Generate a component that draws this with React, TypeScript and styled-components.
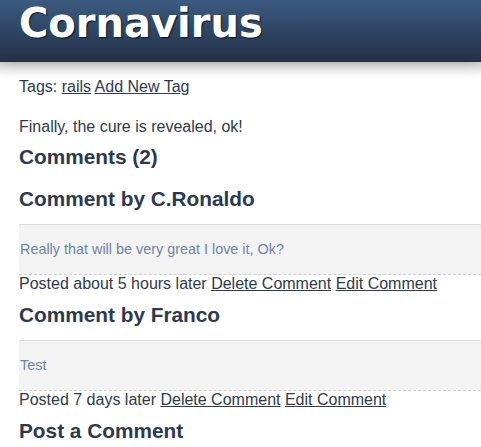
import React from "react";
import styled, { createGlobalStyle } from "styled-components";

const Global = createGlobalStyle`
  html, body { margin: 0; padding: 0; background: #fff; }
  body {
    font-family: "Liberation Sans", Arial, sans-serif;
    font-size: 16px;
    color: #2e3a4c;
    overflow: hidden;
  }
`;

const Header = styled.header`
  height: 62px;
  background: linear-gradient(to bottom, #3c5b80 0%, #2e4563 50%, #233146 100%);
  box-shadow: 0 2px 14px rgba(0, 0, 0, 0.22);
  position: relative;
`;

const Title = styled.h1`
  margin: 0;
  padding: 3px 0 0 19px;
  font-family: "DejaVu Sans", Verdana, sans-serif;
  font-weight: bold;
  font-size: 40px;
  line-height: 40px;
  color: #fff;
  text-shadow: 1px 1px 1px #0b1220;
`;

const Shade = styled.div`
  height: 16px;
  background: linear-gradient(to bottom, #d9d9d9 0%, #f3f3f3 55%, #ffffff 100%);
`;

const Content = styled.main`
  padding-left: 19px;
`;

const Line = styled.p<{ $top?: number }>`
  margin: ${(p) => p.$top ?? 0}px 0 0 0;
  line-height: 18px;
`;

const Link = styled.a`
  color: #2e3a4c;
  text-decoration: underline;
`;

const Heading = styled.h2<{ $top: number }>`
  margin: ${(p) => p.$top}px 0 0 0;
  font-size: 20.8px;
  line-height: 24px;
  font-weight: bold;
  color: #2c3a4f;
`;

const CommentBox = styled.div<{ $top: number }>`
  margin-top: ${(p) => p.$top}px;
  background: #f3f3f3;
  border-top: 1px solid #dcdcdc;
  border-bottom: 1px dashed #cfcfcf;
  padding: 16px 0 16px 1px;
  font-size: 14.4px;
  line-height: 17px;
  color: #7282a2;
  margin-right: -20px;
`;

type Comment = { author: string; body: string; when: string };

const comments: Comment[] = [
  {
    author: "C.Ronaldo",
    body: "Really that will be very great I love it, Ok?",
    when: "about 5 hours",
  },
  { author: "Franco", body: "Test", when: "7 days" },
];

export default function App() {
  return (
    <>
      <Global />
      <Header>
        <Title>Cornavirus</Title>
      </Header>
      <Shade />
      <Content>
        <Line $top={0}>
          Tags: <Link href="#">rails</Link> <Link href="#">Add New Tag</Link>
        </Line>
        <Line $top={22}>Finally, the cure is revealed, ok!</Line>
        <Heading $top={9}>Comments (2)</Heading>
        {comments.map((c, i) => (
          <React.Fragment key={c.author}>
            <Heading $top={i === 0 ? 18 : 10}>Comment by {c.author}</Heading>
            <CommentBox $top={13}>{c.body}</CommentBox>
            <Line>
              Posted {c.when} later <Link href="#">Delete Comment</Link>{" "}
              <Link href="#">Edit Comment</Link>
            </Line>
          </React.Fragment>
        ))}
        <Heading $top={10}>Post a Comment</Heading>
      </Content>
    </>
  );
}
